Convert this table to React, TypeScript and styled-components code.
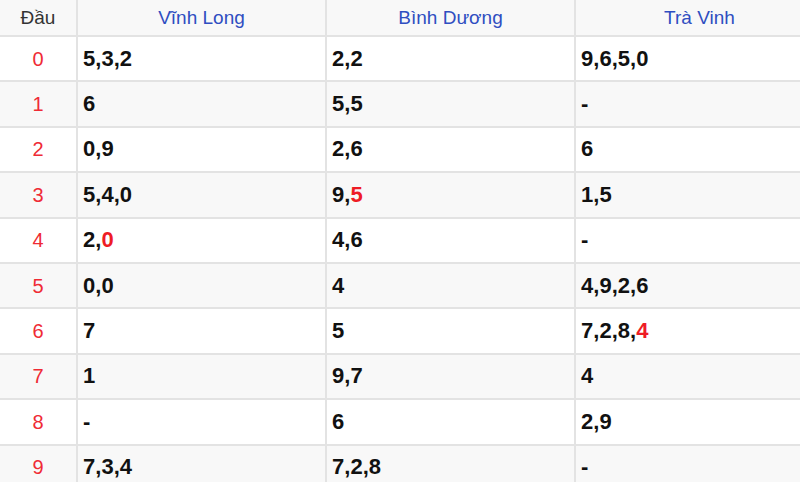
import React from "react";
import styled, { createGlobalStyle } from "styled-components";

const GlobalStyle = createGlobalStyle`
  html, body {
    margin: 0;
    padding: 0;
    background: #ffffff;
    overflow: hidden;
  }
`;

const Table = styled.table`
  border-collapse: collapse;
  table-layout: fixed;
  width: 824px;
  font-family: "Liberation Sans", Arial, sans-serif;
`;

const Col = styled.col<{ $narrow?: boolean }>`
  width: ${(p) => (p.$narrow ? "77px" : "249px")};
`;

const HeadCell = styled.th<{ $blue?: boolean }>`
  height: 35px;
  padding: 0;
  background: #f8f8f8;
  border-bottom: 2px solid #e3e3e3;
  border-right: 2px solid #e3e3e3;
  font-size: 19px;
  line-height: 22px;
  font-weight: normal;
  text-align: center;
  color: ${(p) => (p.$blue ? "#2f4ec1" : "#333333")};
`;

const Row = styled.tr<{ $striped: boolean }>`
  background: ${(p) => (p.$striped ? "#f8f8f8" : "#ffffff")};
`;

const HeadNum = styled.td`
  height: 43.4px;
  padding: 0;
  border-bottom: 2px solid #e3e3e3;
  border-right: 2px solid #e3e3e3;
  text-align: center;
  font-size: 20px;
  line-height: 24px;
  color: #ef2b35;
`;

const ValueCell = styled.td`
  height: 43.4px;
  padding: 0 0 0 5px;
  border-bottom: 2px solid #e3e3e3;
  border-right: 2px solid #e3e3e3;
  font-size: 22px;
  line-height: 24px;
  font-weight: bold;
  color: #111111;
`;

const Hit = styled.span`
  color: #ee1c25;
`;

type Cell = { digits: string[]; hit?: number };

const provinces = ["Vĩnh Long", "Bình Dương", "Trà Vinh"];

const rows: Cell[][] = [
  [{ digits: ["5", "3", "2"] }, { digits: ["2", "2"] }, { digits: ["9", "6", "5", "0"] }],
  [{ digits: ["6"] }, { digits: ["5", "5"] }, { digits: ["-"] }],
  [{ digits: ["0", "9"] }, { digits: ["2", "6"] }, { digits: ["6"] }],
  [{ digits: ["5", "4", "0"] }, { digits: ["9", "5"], hit: 1 }, { digits: ["1", "5"] }],
  [{ digits: ["2", "0"], hit: 1 }, { digits: ["4", "6"] }, { digits: ["-"] }],
  [{ digits: ["0", "0"] }, { digits: ["4"] }, { digits: ["4", "9", "2", "6"] }],
  [{ digits: ["7"] }, { digits: ["5"] }, { digits: ["7", "2", "8", "4"], hit: 3 }],
  [{ digits: ["1"] }, { digits: ["9", "7"] }, { digits: ["4"] }],
  [{ digits: ["-"] }, { digits: ["6"] }, { digits: ["2", "9"] }],
  [{ digits: ["7", "3", "4"] }, { digits: ["7", "2", "8"] }, { digits: ["-"] }],
];

const renderCell = (cell: Cell) =>
  cell.digits.map((d, i) => (
    <React.Fragment key={i}>
      {i > 0 && ","}
      {cell.hit === i ? <Hit>{d}</Hit> : d}
    </React.Fragment>
  ));

export default function App() {
  return (
    <>
      <GlobalStyle />
      <Table>
        <colgroup>
          <Col $narrow />
          <Col />
          <Col />
          <Col />
        </colgroup>
        <thead>
          <tr>
            <HeadCell>Đầu</HeadCell>
            {provinces.map((name) => (
              <HeadCell key={name} $blue>
                {name}
              </HeadCell>
            ))}
          </tr>
        </thead>
        <tbody>
          {rows.map((cells, idx) => (
            <Row key={idx} $striped={idx % 2 === 1}>
              <HeadNum>{idx}</HeadNum>
              {cells.map((cell, c) => (
                <ValueCell key={c}>{renderCell(cell)}</ValueCell>
              ))}
            </Row>
          ))}
        </tbody>
      </Table>
    </>
  );
}
